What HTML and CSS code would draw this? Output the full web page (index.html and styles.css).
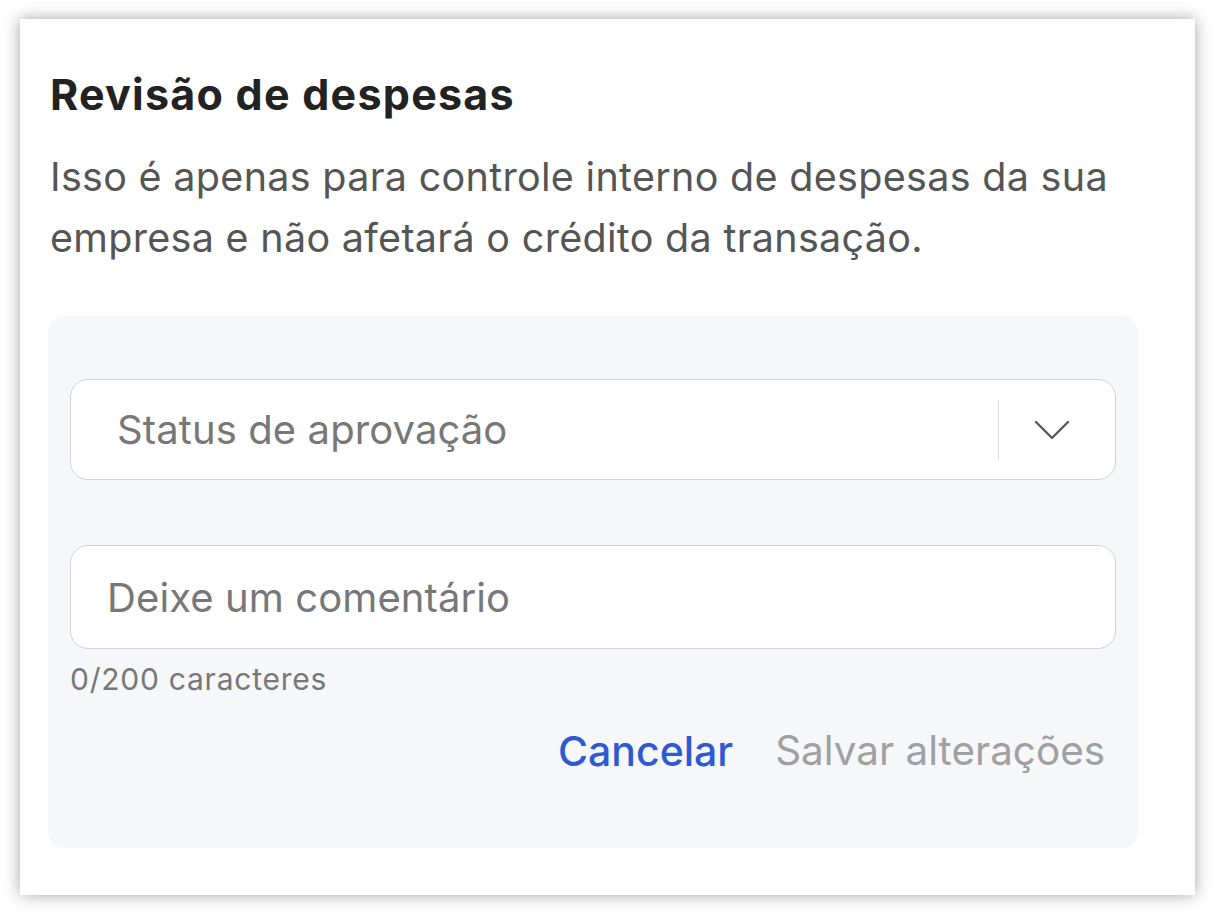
FILE: index.html
```html
<!DOCTYPE html>
<html lang="pt">
<head>
<meta charset="utf-8">
<link rel="stylesheet" href="styles.css">
</head>
<body>
<div class="card">
  <h1 class="title">Revisão de despesas</h1>
  <p class="desc">Isso é apenas para controle interno de despesas da sua empresa e não afetará o crédito da transação.</p>
  <div class="panel">
    <div class="select">
      <span class="placeholder select-ph">Status de aprovação</span>
      <span class="divider"></span>
      <span class="chev">
        <svg width="36" height="22" viewBox="0 0 36 22"><path d="M2 3 L18 19 L34 3" fill="none" stroke="#5a5a5a" stroke-width="2.4" stroke-linecap="round" stroke-linejoin="round"/></svg>
      </span>
    </div>
    <div class="input">
      <span class="placeholder">Deixe um comentário</span>
    </div>
    <div class="counter">0/200 caracteres</div>
    <div class="actions">
      <span class="btn cancel">Cancelar</span>
      <span class="btn save">Salvar alterações</span>
    </div>
  </div>
</div>
</body>
</html>
```
FILE: styles.css
```css
html, body {
  margin: 0;
  padding: 0;
  background: #ffffff;
}
body {
  font-family: "Inter", "Noto Sans", sans-serif;
  padding: 19px 19px 23px 20px;
}
.card {
  width: 1175px;
  height: 876px;
  box-sizing: border-box;
  background: #fff;
  box-shadow: 0 0 15px rgba(0,0,0,0.36);
  padding: 49px 57px 0 28px;
}
.title {
  margin: 0 0 0 2px;
  font-size: 43px;
  font-weight: 700;
  color: #222;
  line-height: 52px;
  letter-spacing: 1.25px;
}
.desc {
  margin: 27px 0 0 2px;
  font-size: 39.5px;
  line-height: 61px;
  color: #555;
  font-weight: 400;
  letter-spacing: 0.3px;
}
.panel {
  margin-top: 47px;
  background: #f6f7f9;
  border-radius: 16px;
  padding: 63px 22px 0 22px;
  height: 532px;
  box-sizing: border-box;
}
.select, .input {
  background: #fff;
  border: 1.5px solid #d2d2d4;
  border-radius: 18px;
  box-sizing: border-box;
  display: flex;
  align-items: center;
}
.select {
  height: 101px;
  padding-left: 46px;
}
.input {
  margin-top: 65px;
  height: 104px;
  padding-left: 36px;
}
.placeholder {
  font-size: 40px;
  color: #777;
  flex: 1;
  letter-spacing: 0.1px;
}
.divider {
  width: 1.5px;
  height: 62px;
  background: #dcdcdc;
}
.chev {
  width: 116px;
  box-sizing: border-box;
  padding-right: 10px;
  display: flex;
  justify-content: center;
  align-items: center;
}
.counter {
  margin-top: 12px;
  font-size: 30px;
  color: #777;
  letter-spacing: 0.75px;
}
.actions {
  margin-top: 29px;
  display: flex;
  justify-content: flex-end;
  gap: 42px;
  padding-right: 11px;
  line-height: 50px;
}
.btn {
  font-size: 41px;
  font-weight: 500;
}
.cancel { color: #2d59d3; }
.save { color: #a0a0a2; font-weight: 400; font-size: 40.4px; }
```
